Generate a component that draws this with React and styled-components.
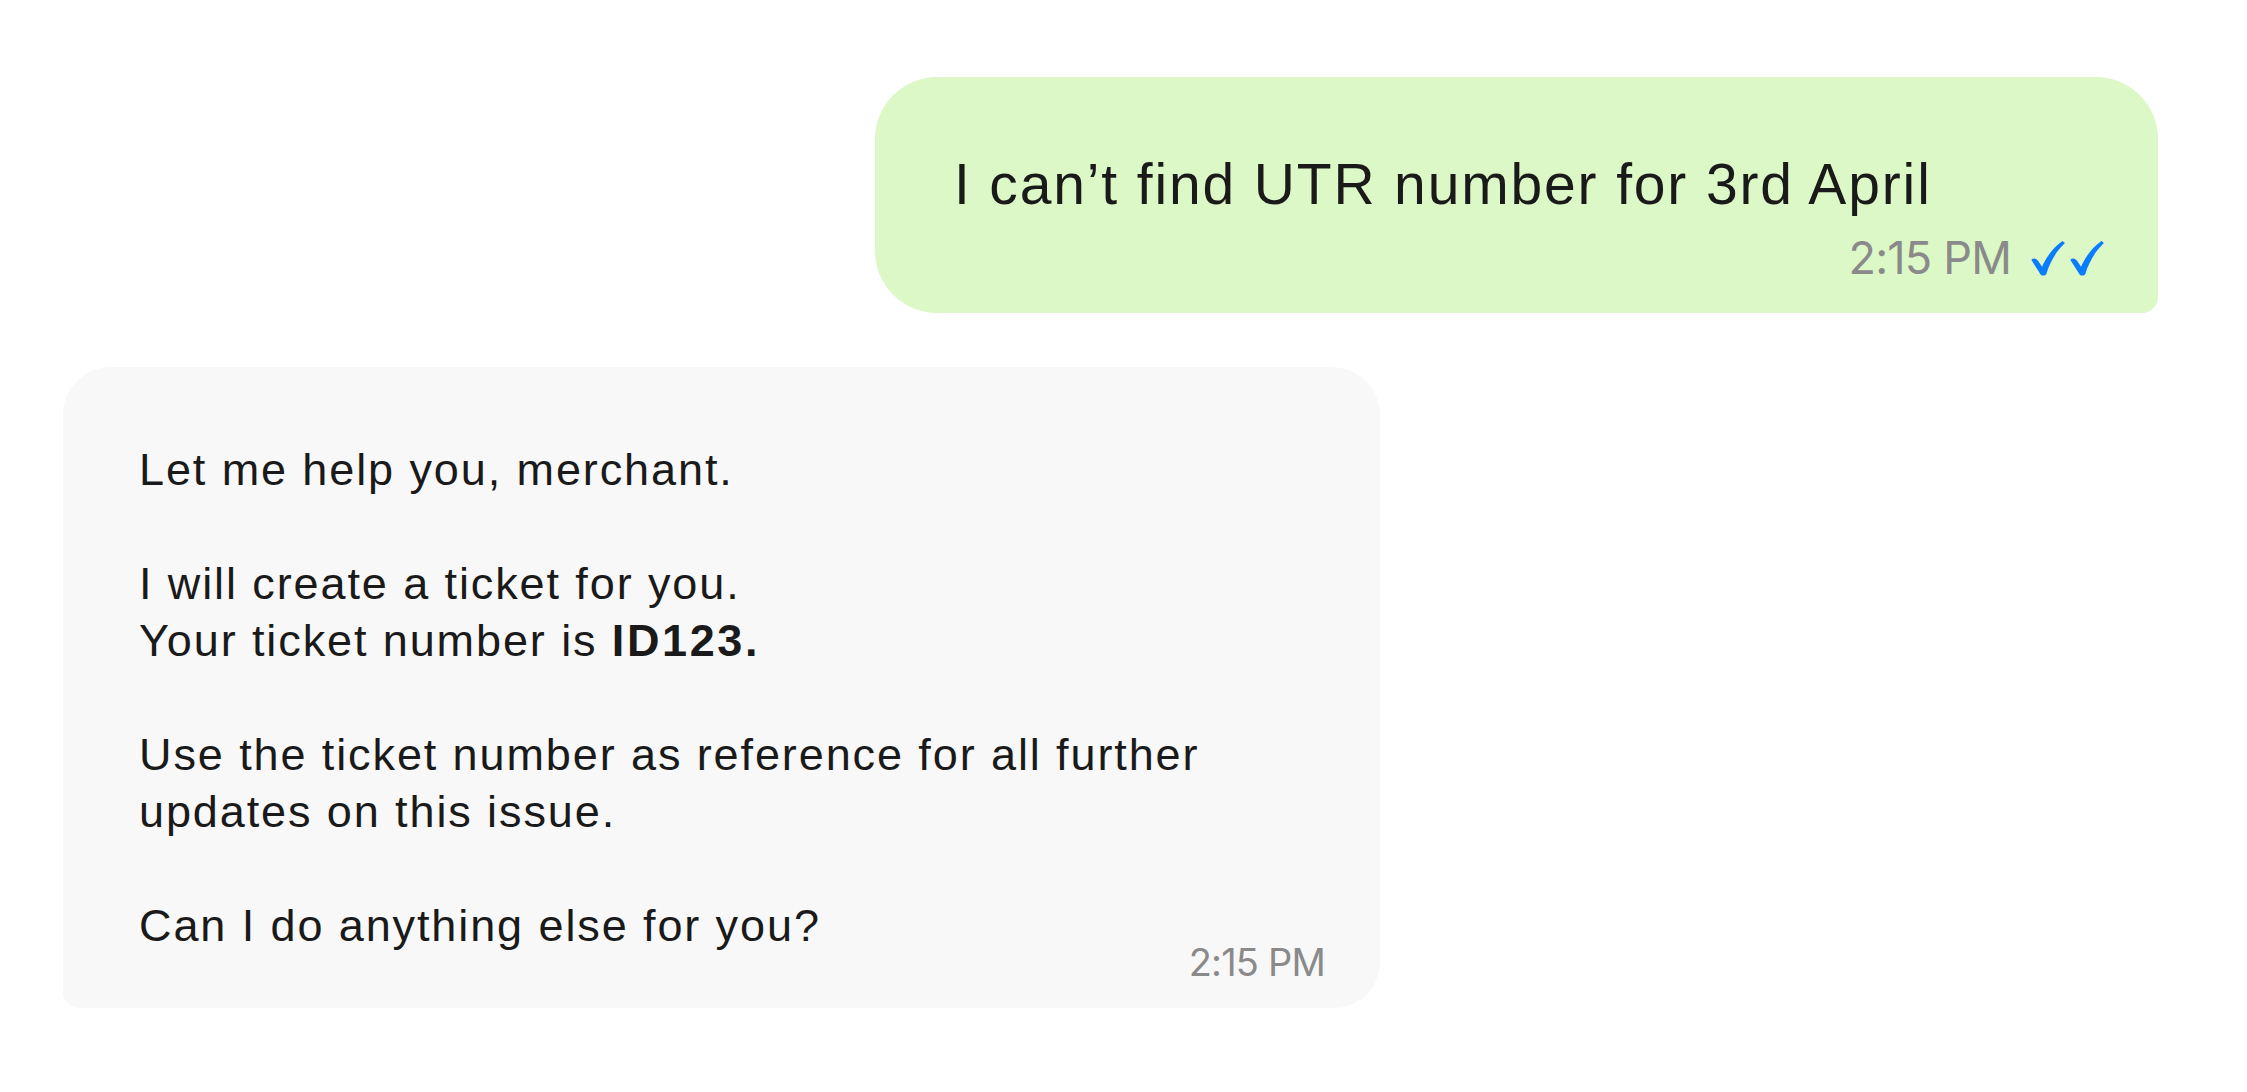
import React from "react";
import styled, { createGlobalStyle } from "styled-components";

const GlobalStyle = createGlobalStyle`
  html, body { margin: 0; padding: 0; background: #ffffff; }
  body { font-family: "Liberation Sans", Arial, sans-serif; }
`;

const Thread = styled.div`
  display: flex;
  flex-direction: column;
  gap: 54px;
  padding: 77px 89px 60px 63px;
`;

const Bubble = styled.div`
  box-sizing: border-box;
  display: flex;
  flex-direction: column;
  color: #1a1a1a;
  font-family: "Liberation Sans", Arial, sans-serif;
  align-self: ${(p) => (p.$out ? "flex-end" : "flex-start")};
  width: ${(p) => p.$width}px;
  background: ${(p) => (p.$out ? "#dbf8c6" : "#f8f8f8")};
  border-radius: ${(p) => (p.$out ? "62px 62px 16px 62px" : "48px 48px 46px 16px")};
  padding: ${(p) => (p.$out ? "73px 53px 33px 79px" : "74px 55px 38px 76px")};
`;

const OutText = styled.div`
  font-size: 57px;
  line-height: 68px;
  letter-spacing: 1.85px;
  white-space: nowrap;
`;

const InBody = styled.div`
  display: flex;
  flex-direction: column;
  gap: 57px;
`;

const Para = styled.p`
  margin: 0;
  font-size: 45px;
  line-height: 57px;
  letter-spacing: 1.9px;
  b { font-weight: 700; letter-spacing: 2.6px; }
`;

const Meta = styled.div`
  display: flex;
  justify-content: flex-end;
  align-items: center;
  gap: 18px;
  margin-top: ${(p) => p.$mt}px;
`;

const Time = styled.span`
  font-family: Inter, "Open Sans", sans-serif;
  font-size: ${(p) => p.$size}px;
  line-height: ${(p) => p.$lh}px;
  color: #8a8a8a;
  letter-spacing: -0.8px;
`;

const Ticks = styled.span`
  display: inline-flex;
  gap: 2px;
  color: #0a7cff;
  svg { display: block; }
`;

const Check = () => (
  <svg width="37" height="36" viewBox="0 0 24 24" fill="currentColor">
    <path d="M1.2 13.2 C2.6 11.8 4.6 12.2 5.8 14 L8.4 17.8 C11.6 10.6 16 4.8 22 0.6 L23.6 2 C18.4 7 14 13.6 11.2 22.6 C10.4 24 8 24 7.2 22.6 Z" />
  </svg>
);

export default function App() {
  return (
    <>
      <GlobalStyle />
      <Thread>
        <Bubble $out $width={1283}>
          <OutText>I can’t find UTR number for 3rd April</OutText>
          <Meta $mt={17}>
            <Time $size={45} $lh={45}>2:15 PM</Time>
            <Ticks>
              <Check />
              <Check />
            </Ticks>
          </Meta>
        </Bubble>
        <Bubble $width={1317}>
          <InBody>
            <Para>Let me help you, merchant.</Para>
            <Para>
              I will create a ticket for you.
              <br />
              Your ticket number is <b>ID123.</b>
            </Para>
            <Para>
              Use the ticket number as reference for all further
              <br />
              updates on this issue.
            </Para>
            <Para>Can I do anything else for you?</Para>
          </InBody>
          <Meta $mt={0}>
            <Time $size={38} $lh={16}>2:15 PM</Time>
          </Meta>
        </Bubble>
      </Thread>
    </>
  );
}
